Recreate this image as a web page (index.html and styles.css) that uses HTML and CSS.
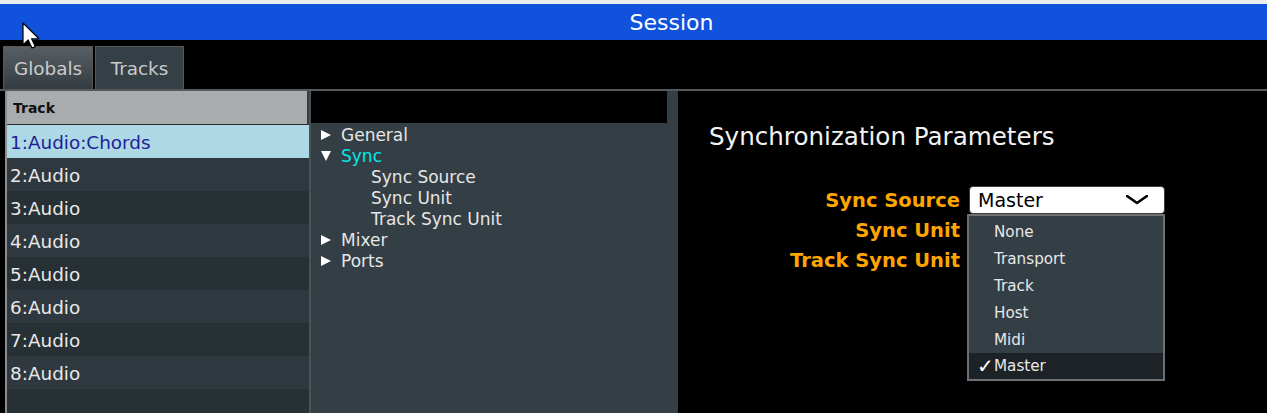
FILE: index.html
```html
<!DOCTYPE html>
<html>
<head>
<meta charset="utf-8">
<link rel="stylesheet" href="styles.css">
</head>
<body>
<div class="app">
  <div class="topstrip"></div>
  <div class="titlebar">Session</div>
  <div class="tabs">
    <div class="tab tab-globals">Globals</div>
    <div class="tab tab-tracks">Tracks</div>
  </div>
  <div class="divider"></div>
  <div class="main">
    <div class="tracklist">
      <div class="list-header">Track</div>
      <div class="row selected">1:Audio:Chords</div>
      <div class="row even">2:Audio</div>
      <div class="row odd">3:Audio</div>
      <div class="row even">4:Audio</div>
      <div class="row odd">5:Audio</div>
      <div class="row even">6:Audio</div>
      <div class="row odd">7:Audio</div>
      <div class="row even">8:Audio</div>
      <div class="row odd"></div>
    </div>
    <div class="tree">
      <div class="tree-top"></div>
      <div class="tree-items">
        <div class="node"><svg class="tri" viewBox="0 0 10 10"><polygon points="0,0 10,5 0,10" /></svg><span>General</span></div>
        <div class="node"><svg class="tri" viewBox="0 0 10 10"><polygon points="0,0 10,0 5,10" /></svg><span class="open">Sync</span></div>
        <div class="node child">Sync Source</div>
        <div class="node child">Sync Unit</div>
        <div class="node child">Track Sync Unit</div>
        <div class="node"><svg class="tri" viewBox="0 0 10 10"><polygon points="0,0 10,5 0,10" /></svg><span>Mixer</span></div>
        <div class="node"><svg class="tri" viewBox="0 0 10 10"><polygon points="0,0 10,5 0,10" /></svg><span>Ports</span></div>
      </div>
    </div>
    <div class="params">
      <div class="params-title">Synchronization Parameters</div>
      <div class="form">
        <div class="label">Sync Source</div>
        <div class="combo"><span>Master</span><svg class="chev" viewBox="0 0 22 10"><polyline points="1,1 11,8 21,1" /></svg></div>
        <div class="label">Sync Unit</div>
        <div></div>
        <div class="label">Track Sync Unit</div>
        <div></div>
      </div>
      <div class="popup">
        <div class="item">None</div>
        <div class="item">Transport</div>
        <div class="item">Track</div>
        <div class="item">Host</div>
        <div class="item">Midi</div>
        <div class="item chosen"><span class="check">✓</span>Master</div>
      </div>
    </div>
  </div>
  <svg class="cursor" viewBox="0 0 19 28" width="19" height="28">
    <path d="M1,1 L1,23 L6.2,18 L10,26 L13.3,24.6 L9.6,16.8 L17,16.8 Z" fill="#fff" stroke="#000" stroke-width="1.2" stroke-linejoin="round"/>
  </svg>
</div>
</body>
</html>
```
FILE: styles.css
```css
html, body {
  margin: 0;
  padding: 0;
  background: #000;
}
body {
  font-family: "DejaVu Sans", "Liberation Sans", sans-serif;
  width: 1267px;
  height: 413px;
  overflow: hidden;
}
.app {
  position: relative;
  width: 1267px;
  height: 413px;
  display: flex;
  flex-direction: column;
}
.topstrip {
  height: 4px;
  background: #ececec;
}
.titlebar {
  height: 36px;
  background: #1052dc;
  color: #fff;
  font-size: 22px;
  display: flex;
  align-items: center;
  justify-content: center;
  padding-left: 76px;
  box-sizing: border-box;
}
.tabs {
  height: 49px;
  display: flex;
  align-items: flex-end;
  gap: 2px;
  padding-left: 3px;
  box-sizing: border-box;
}
.tab {
  height: 43px;
  width: 90px;
  box-sizing: border-box;
  border: 1px solid #55595c;
  border-bottom: none;
  color: #c9cbcd;
  font-size: 18.4px;
  display: flex;
  align-items: center;
  justify-content: center;
}
.tab-globals {
  background: linear-gradient(#585f64, #353c41);
}
.tab-tracks {
  background: #353f46;
  width: 89px;
}
.divider {
  height: 2px;
  background: #55595c;
}
.main {
  flex: 1;
  display: flex;
  min-height: 0;
}
.tracklist {
  margin-left: 5px;
  width: 306px;
  box-sizing: border-box;
  border-left: 2px solid #8b8e90;
  border-right: 2px solid #4b5256;
  display: flex;
  flex-direction: column;
  overflow: hidden;
}
.list-header {
  height: 34px;
  flex: none;
  box-sizing: border-box;
  background: #a9acae;
  border-right: 2px solid #3a3d40;
  border-bottom: 1px solid #2a2d30;
  color: #111;
  font-weight: bold;
  font-size: 14px;
  display: flex;
  align-items: center;
  padding-left: 6px;
}
.row {
  height: 33px;
  flex: none;
  box-sizing: border-box;
  padding-top: 2px;
  font-size: 18.4px;
  color: #e8e8e8;
  display: flex;
  align-items: center;
  padding-left: 3px;
}
.row.selected {
  background: #add8e6;
  color: #1f1f96;
}
.row.even { background: #2e383e; }
.row.odd { background: #263035; }
.tree {
  width: 367px;
  background: #343e45;
  display: flex;
  flex-direction: column;
}
.tree-top {
  height: 32px;
  width: 356px;
  background: #000;
}
.tree-items {
  padding-top: 1px;
  padding-left: 10px;
}
.node {
  height: 21px;
  font-size: 17px;
  color: #e6e6e6;
  display: flex;
  align-items: center;
}
.node .tri {
  width: 10px;
  height: 10px;
  fill: #fff;
  margin-right: 10px;
}
.node .open {
  color: #00e8ee;
}
.node.child {
  padding-left: 50px;
}
.params {
  flex: 1;
  position: relative;
  background: #000;
}
.params-title {
  color: #f2f2f2;
  font-size: 24.6px;
  padding-left: 31px;
  margin-top: 32px;
  line-height: 28px;
}
.form {
  margin-top: 34px;
  display: grid;
  grid-template-columns: 282px 196px;
  grid-auto-rows: 30px;
  column-gap: 9px;
  align-items: center;
}
.label {
  color: #ffa500;
  font-weight: bold;
  font-size: 19.5px;
  text-align: right;
}
.combo {
  height: 28px;
  box-sizing: border-box;
  background: #fff;
  border: 1px solid #3c3c3c;
  border-radius: 4px;
  display: flex;
  align-items: center;
  justify-content: space-between;
  padding: 0 16px 0 8px;
  font-size: 19px;
  color: #000;
  margin-top: -1px;
}
.chev {
  width: 22px;
  height: 10px;
  fill: none;
  stroke: #000;
  stroke-width: 2.6;
  stroke-linecap: round;
  stroke-linejoin: round;
}
.popup {
  position: absolute;
  left: 289px;
  top: 123px;
  width: 198px;
  height: 167px;
  box-sizing: border-box;
  background: #343e45;
  border: 2px solid #6c7074;
  padding-top: 2px;
}
.item {
  height: 27px;
  display: flex;
  align-items: center;
  padding-left: 25px;
  font-size: 15.2px;
  color: #e8e8e8;
  position: relative;
}
.item.chosen {
  background: #1c2226;
  height: 26px;
}
.check {
  position: absolute;
  left: 8px;
  font-size: 20px;
  font-weight: bold;
  color: #fff;
}
.cursor {
  position: absolute;
  left: 22px;
  top: 22px;
}
```
